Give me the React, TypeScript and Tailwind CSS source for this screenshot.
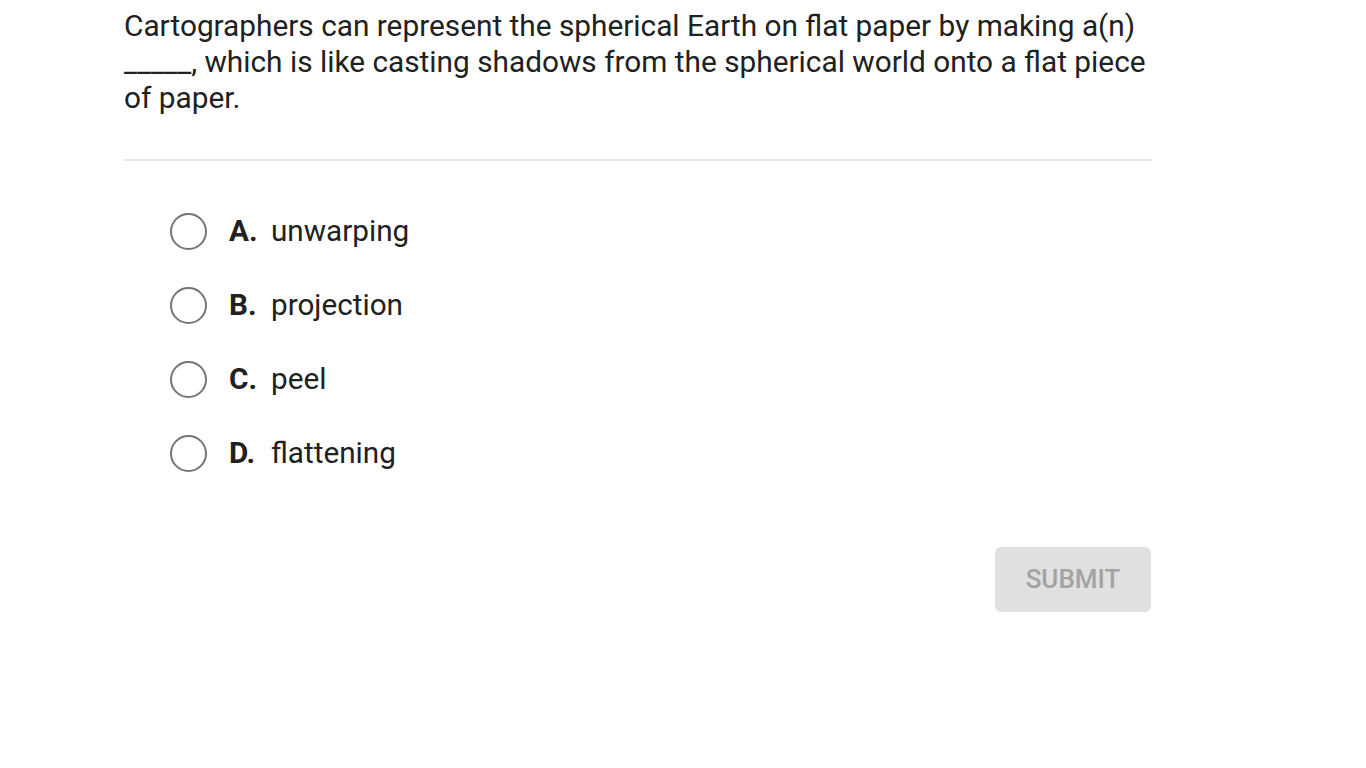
import React from "react";

const options = [
  { letter: "A.", text: "unwarping" },
  { letter: "B.", text: "projection" },
  { letter: "C.", text: "peel" },
  { letter: "D.", text: "flattening" },
];

export default function App() {
  return (
    <div className="min-h-screen bg-white font-['Roboto',sans-serif] text-[#212121]">
      <div className="ml-[124px] w-[1027px] pt-[8px]">
        <p className="text-[29.8px] leading-[36px]">
          Cartographers can represent the spherical Earth on flat paper by making a(n) _____, which is like casting
          shadows from the spherical world onto a flat piece of paper.
        </p>
        <div className="mt-[43px] h-[2px] bg-[#e6e6e6]" />
        <ul className="mt-[33px]">
          {options.map((o) => (
            <li key={o.letter} className="flex h-[74px] items-center">
              <span className="ml-[46px] h-[37px] w-[37px] shrink-0 rounded-full border-2 border-[#757575]" />
              <span className="ml-[22px] w-[42px] text-[29.7px] font-bold">{o.letter}</span>
              <span className="text-[29.7px]">{o.text}</span>
            </li>
          ))}
        </ul>
        <div className="mt-[57px] flex justify-end">
          <button className="h-[65px] w-[156px] rounded-md bg-[#e0e0e0] text-[26px] font-medium text-[#a3a3a3]">
            SUBMIT
          </button>
        </div>
      </div>
    </div>
  );
}
